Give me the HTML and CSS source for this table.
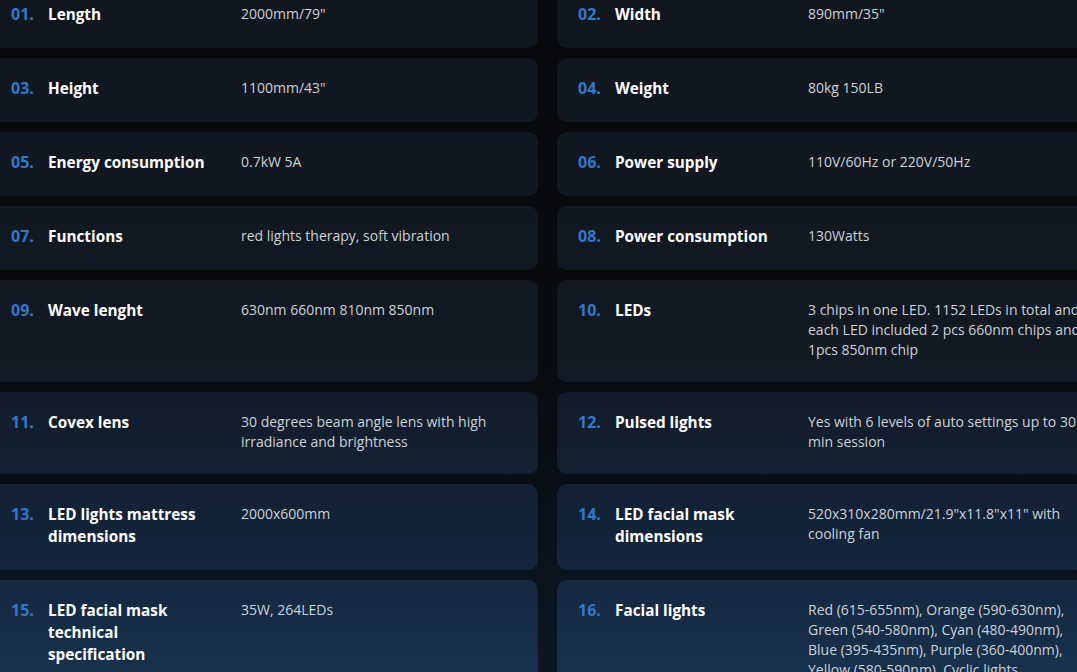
FILE: index.html
```html
<!DOCTYPE html>
<html lang="en">
<head>
<meta charset="utf-8">
<title>Specifications</title>
<link rel="stylesheet" href="styles.css">
</head>
<body>
<div class="specs">
  <div class="spec"><span class="num">01.</span><span class="label">Length</span><span class="value">2000mm/79"</span></div>
  <div class="spec"><span class="num">02.</span><span class="label">Width</span><span class="value">890mm/35"</span></div>
  <div class="spec"><span class="num">03.</span><span class="label">Height</span><span class="value">1100mm/43"</span></div>
  <div class="spec"><span class="num">04.</span><span class="label">Weight</span><span class="value">80kg 150LB</span></div>
  <div class="spec"><span class="num">05.</span><span class="label">Energy consumption</span><span class="value">0.7kW 5A</span></div>
  <div class="spec"><span class="num">06.</span><span class="label">Power supply</span><span class="value">110V/60Hz or 220V/50Hz</span></div>
  <div class="spec"><span class="num">07.</span><span class="label">Functions</span><span class="value">red lights therapy, soft vibration</span></div>
  <div class="spec"><span class="num">08.</span><span class="label">Power consumption</span><span class="value">130Watts</span></div>
  <div class="spec"><span class="num">09.</span><span class="label">Wave lenght</span><span class="value">630nm 660nm 810nm 850nm</span></div>
  <div class="spec"><span class="num">10.</span><span class="label">LEDs</span><span class="value">3 chips in one LED. 1152 LEDs in total and each LED included 2 pcs 660nm chips and 1pcs 850nm chip</span></div>
  <div class="spec"><span class="num">11.</span><span class="label">Covex lens</span><span class="value">30 degrees beam angle lens with high irradiance and brightness</span></div>
  <div class="spec"><span class="num">12.</span><span class="label">Pulsed lights</span><span class="value">Yes with 6 levels of auto settings up to 30 min session</span></div>
  <div class="spec"><span class="num">13.</span><span class="label">LED lights mattress dimensions</span><span class="value">2000x600mm</span></div>
  <div class="spec"><span class="num">14.</span><span class="label">LED facial mask dimensions</span><span class="value">520x310x280mm/21.9"x11.8"x11" with cooling fan</span></div>
  <div class="spec"><span class="num">15.</span><span class="label">LED facial mask technical specification</span><span class="value">35W, 264LEDs</span></div>
  <div class="spec"><span class="num">16.</span><span class="label">Facial lights</span><span class="value">Red (615-655nm), Orange (590-630nm), Green (540-580nm), Cyan (480-490nm), Blue (395-435nm), Purple (360-400nm), Yellow (580-590nm), Cyclic lights</span></div>
</div>
</body>
</html>
```
FILE: styles.css
```css
html, body {
  margin: 0;
  padding: 0;
  height: 100%;
  overflow: hidden;
}
body {
  background: linear-gradient(180deg, #08090b 0%, #090b0e 55%, #0b1622 100%) fixed;
  font-family: "Open Sans", "Noto Sans", sans-serif;
  color: #fff;
}
.specs {
  display: grid;
  grid-template-columns: 548px 548px;
  column-gap: 19px;
  row-gap: 10px;
  margin: -16px 0 0 -10px;
  width: 1115px;
}
.spec {
  display: grid;
  grid-template-columns: 37px 193px 1fr;
  align-items: start;
  padding: 20px 20px 22px 21px;
  border-radius: 10px;
  background: linear-gradient(180deg, #10161e 0%, #111922 50%, #13243a 80%, #17314c 100%) fixed;
}
.num {
  color: #3079cc;
  font-weight: 700;
  font-size: 16px;
  line-height: 22px;
  margin: -1px 0 1px;
}
.label {
  color: #fff;
  font-weight: 700;
  font-size: 15.3px;
  line-height: 22px;
  margin: -1px 0 1px;
  padding-right: 28px;
}
.value {
  color: #cdd2d8;
  font-size: 14px;
  line-height: 20px;
}
```
